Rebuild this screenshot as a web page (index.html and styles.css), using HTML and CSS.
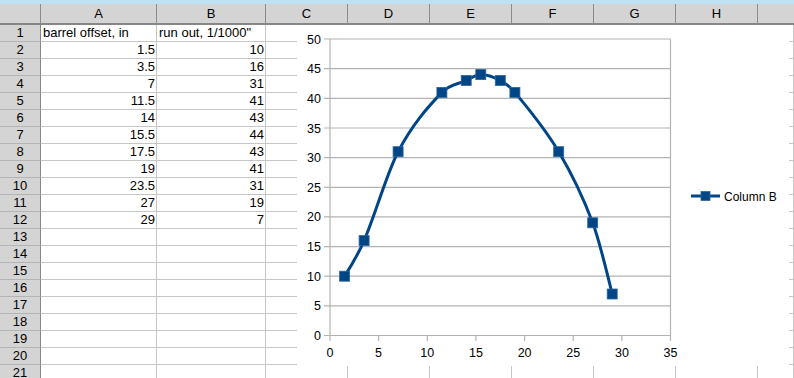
FILE: index.html
```html
<!DOCTYPE html>
<html lang="en">
<head>
    <meta charset="UTF-8">
    <title>Sheet</title>
    <link rel="stylesheet" href="styles.css">
</head>
<body>
    <div class="strip"></div>
    <div class="sheet">
        <div class="hd corner"></div><div class="hd">A</div><div class="hd">B</div><div class="hd">C</div><div class="hd">D</div><div class="hd">E</div><div class="hd">F</div><div class="hd">G</div><div class="hd">H</div><div class="hd last"></div>

        <div class="rh">1</div><div class="c">barrel offset, in</div><div class="c">run out, 1/1000"</div><div class="c"></div><div class="c"></div><div class="c"></div><div class="c"></div><div class="c"></div><div class="c"></div><div class="c"></div>
        <div class="rh">2</div><div class="c n">1.5</div><div class="c n">10</div><div class="c"></div><div class="c"></div><div class="c"></div><div class="c"></div><div class="c"></div><div class="c"></div><div class="c"></div>
        <div class="rh">3</div><div class="c n">3.5</div><div class="c n">16</div><div class="c"></div><div class="c"></div><div class="c"></div><div class="c"></div><div class="c"></div><div class="c"></div><div class="c"></div>
        <div class="rh">4</div><div class="c n">7</div><div class="c n">31</div><div class="c"></div><div class="c"></div><div class="c"></div><div class="c"></div><div class="c"></div><div class="c"></div><div class="c"></div>
        <div class="rh">5</div><div class="c n">11.5</div><div class="c n">41</div><div class="c"></div><div class="c"></div><div class="c"></div><div class="c"></div><div class="c"></div><div class="c"></div><div class="c"></div>
        <div class="rh">6</div><div class="c n">14</div><div class="c n">43</div><div class="c"></div><div class="c"></div><div class="c"></div><div class="c"></div><div class="c"></div><div class="c"></div><div class="c"></div>
        <div class="rh">7</div><div class="c n">15.5</div><div class="c n">44</div><div class="c"></div><div class="c"></div><div class="c"></div><div class="c"></div><div class="c"></div><div class="c"></div><div class="c"></div>
        <div class="rh">8</div><div class="c n">17.5</div><div class="c n">43</div><div class="c"></div><div class="c"></div><div class="c"></div><div class="c"></div><div class="c"></div><div class="c"></div><div class="c"></div>
        <div class="rh">9</div><div class="c n">19</div><div class="c n">41</div><div class="c"></div><div class="c"></div><div class="c"></div><div class="c"></div><div class="c"></div><div class="c"></div><div class="c"></div>
        <div class="rh">10</div><div class="c n">23.5</div><div class="c n">31</div><div class="c"></div><div class="c"></div><div class="c"></div><div class="c"></div><div class="c"></div><div class="c"></div><div class="c"></div>
        <div class="rh">11</div><div class="c n">27</div><div class="c n">19</div><div class="c"></div><div class="c"></div><div class="c"></div><div class="c"></div><div class="c"></div><div class="c"></div><div class="c"></div>
        <div class="rh">12</div><div class="c n">29</div><div class="c n">7</div><div class="c"></div><div class="c"></div><div class="c"></div><div class="c"></div><div class="c"></div><div class="c"></div><div class="c"></div>
        <div class="rh">13</div><div class="c"></div><div class="c"></div><div class="c"></div><div class="c"></div><div class="c"></div><div class="c"></div><div class="c"></div><div class="c"></div><div class="c"></div>
        <div class="rh">14</div><div class="c"></div><div class="c"></div><div class="c"></div><div class="c"></div><div class="c"></div><div class="c"></div><div class="c"></div><div class="c"></div><div class="c"></div>
        <div class="rh">15</div><div class="c"></div><div class="c"></div><div class="c"></div><div class="c"></div><div class="c"></div><div class="c"></div><div class="c"></div><div class="c"></div><div class="c"></div>
        <div class="rh">16</div><div class="c"></div><div class="c"></div><div class="c"></div><div class="c"></div><div class="c"></div><div class="c"></div><div class="c"></div><div class="c"></div><div class="c"></div>
        <div class="rh">17</div><div class="c"></div><div class="c"></div><div class="c"></div><div class="c"></div><div class="c"></div><div class="c"></div><div class="c"></div><div class="c"></div><div class="c"></div>
        <div class="rh">18</div><div class="c"></div><div class="c"></div><div class="c"></div><div class="c"></div><div class="c"></div><div class="c"></div><div class="c"></div><div class="c"></div><div class="c"></div>
        <div class="rh">19</div><div class="c"></div><div class="c"></div><div class="c"></div><div class="c"></div><div class="c"></div><div class="c"></div><div class="c"></div><div class="c"></div><div class="c"></div>
        <div class="rh">20</div><div class="c"></div><div class="c"></div><div class="c"></div><div class="c"></div><div class="c"></div><div class="c"></div><div class="c"></div><div class="c"></div><div class="c"></div>
        <div class="rh">21</div><div class="c"></div><div class="c"></div><div class="c"></div><div class="c"></div><div class="c"></div><div class="c"></div><div class="c"></div><div class="c"></div><div class="c"></div>
    </div>

    <!-- chart object floating over the cells -->
    <svg class="chart" width="492" height="341" viewBox="297 25 492 341">
        <rect x="297" y="25" width="492" height="341" fill="#fff"/>
        <g class="grid">
            <line x1="324" y1="39" x2="670.5" y2="39"/>
            <line x1="324" y1="68.7" x2="670.5" y2="68.7"/>
            <line x1="324" y1="98.3" x2="670.5" y2="98.3"/>
            <line x1="324" y1="128" x2="670.5" y2="128"/>
            <line x1="324" y1="157.6" x2="670.5" y2="157.6"/>
            <line x1="324" y1="187.3" x2="670.5" y2="187.3"/>
            <line x1="324" y1="216.9" x2="670.5" y2="216.9"/>
            <line x1="324" y1="246.6" x2="670.5" y2="246.6"/>
            <line x1="324" y1="276.2" x2="670.5" y2="276.2"/>
            <line x1="324" y1="305.9" x2="670.5" y2="305.9"/>
            <line x1="324" y1="335.5" x2="670.5" y2="335.5"/>
            <line x1="330" y1="39" x2="330" y2="341"/>
            <line x1="670.5" y1="39" x2="670.5" y2="341"/>
            <line x1="378.6" y1="335.5" x2="378.6" y2="341"/>
            <line x1="427.3" y1="335.5" x2="427.3" y2="341"/>
            <line x1="475.9" y1="335.5" x2="475.9" y2="341"/>
            <line x1="524.6" y1="335.5" x2="524.6" y2="341"/>
            <line x1="573.2" y1="335.5" x2="573.2" y2="341"/>
            <line x1="621.9" y1="335.5" x2="621.9" y2="341"/>
        </g>
        <g class="ylabels">
            <text x="321" y="43.5">50</text>
            <text x="321" y="73.2">45</text>
            <text x="321" y="102.8">40</text>
            <text x="321" y="132.5">35</text>
            <text x="321" y="162.1">30</text>
            <text x="321" y="191.8">25</text>
            <text x="321" y="221.4">20</text>
            <text x="321" y="251.1">15</text>
            <text x="321" y="280.7">10</text>
            <text x="321" y="310.4">5</text>
            <text x="321" y="340">0</text>
        </g>
        <g class="xlabels">
            <text x="330" y="356.5">0</text>
            <text x="378.6" y="356.5">5</text>
            <text x="427.3" y="356.5">10</text>
            <text x="475.9" y="356.5">15</text>
            <text x="524.6" y="356.5">20</text>
            <text x="573.2" y="356.5">25</text>
            <text x="621.9" y="356.5">30</text>
            <text x="670.5" y="356.5">35</text>
        </g>
        <path class="series" d="M344.6,276.2 C351.1,265.96 357.6,255.73 364.1,240.6 C375.43,214.23 386.77,173.29 398.1,151.7 C412.7,123.89 427.3,107.67 441.9,92.4 C450,83.93 458.1,84.21 466.2,80.5 C471.07,78.27 475.93,74.6 480.8,74.6 C487.3,74.6 493.8,77.11 500.3,80.5 C505.17,83.04 510.03,86.46 514.9,92.4 C529.5,110.2 544.1,127.23 558.7,151.7 C570.03,170.69 581.37,192.66 592.7,222.8 C599.2,240.09 605.7,267.04 612.2,294"/>
        <g class="marks">
            <rect x="339.6" y="271.2" width="10" height="10"/>
            <rect x="359.1" y="235.6" width="10" height="10"/>
            <rect x="393.1" y="146.7" width="10" height="10"/>
            <rect x="436.9" y="87.4" width="10" height="10"/>
            <rect x="461.2" y="75.5" width="10" height="10"/>
            <rect x="475.8" y="69.6" width="10" height="10"/>
            <rect x="495.3" y="75.5" width="10" height="10"/>
            <rect x="509.9" y="87.4" width="10" height="10"/>
            <rect x="553.7" y="146.7" width="10" height="10"/>
            <rect x="587.7" y="217.8" width="10" height="10"/>
            <rect x="607.2" y="289" width="10" height="10"/>
        </g>
        <g class="legend">
            <line class="series" x1="691" y1="196" x2="720" y2="196"/>
            <rect class="mark" x="701" y="191.5" width="9" height="9"/>
            <text x="724" y="200.5">Column B</text>
        </g>
    </svg>
</body>
</html>
```

FILE: styles.css
```css
* {
    margin: 0;
    padding: 0;
    box-sizing: border-box;
}

body {
    width: 794px;
    height: 378px;
    overflow: hidden;
    position: relative;
    background: #fff;
    font-family: "Liberation Sans", Arial, sans-serif;
    font-size: 13px;
    color: #000;
}

.strip {
    height: 4px;
    background: #bfe1f5;
}

.sheet {
    display: grid;
    grid-template-columns: 41px 116px 109px repeat(6, 82px) 1fr;
    grid-template-rows: 21px;
    grid-auto-rows: 17px;
}

.hd {
    background: #d4d4d4;
    border-right: 1px solid #8c8c8c;
    border-bottom: 2px solid #878787;
    text-align: center;
    line-height: 19px;
}

.hd.last {
    border-right: none;
}

.rh {
    background: #d4d4d4;
    border-right: 1px solid #878787;
    border-bottom: 1px solid #b4b4b4;
    text-align: center;
    line-height: 16px;
}

.c {
    border-right: 1px solid #c6c6c6;
    border-bottom: 1px solid #c6c6c6;
    line-height: 16px;
    padding: 0 1px 0 2px;
    white-space: nowrap;
    overflow: hidden;
}

.c.n {
    text-align: right;
}

/* chart */
.chart {
    position: absolute;
    left: 297px;
    top: 25px;
    font-family: "Liberation Sans", Arial, sans-serif;
    font-size: 12.5px;
}

.grid line {
    stroke: #b3b3b3;
    stroke-width: 1.2;
}

.ylabels text {
    text-anchor: end;
    fill: #000;
}

.xlabels text {
    text-anchor: middle;
    fill: #000;
}

.series {
    fill: none;
    stroke: #004586;
    stroke-width: 3;
}

.marks rect,
.legend .mark {
    fill: #004586;
    stroke: #2f659b;
    stroke-width: 0.8;
}

.legend text {
    font-size: 12px;
    fill: #000;
}
```
